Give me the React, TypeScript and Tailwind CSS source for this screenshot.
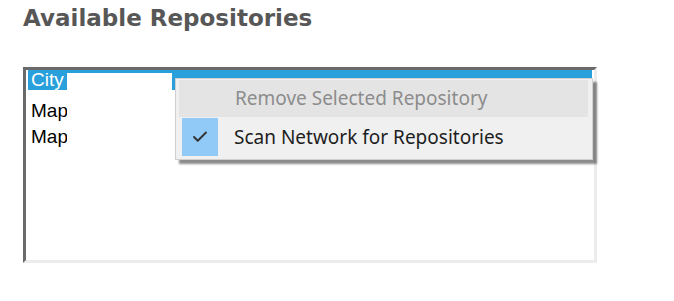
import { Check } from "lucide-react";

const repos = [
    { name: "City", selected: true },
    { name: "Map", selected: false },
    { name: "Map", selected: false },
];

const ContextMenu = () => {
    return (
        <div className="absolute left-[175px] top-[78px] w-[418px] h-[82px] bg-[#f0f0f0] border border-[#cfcfcf] shadow-[4px_4px_2px_rgba(0,0,0,0.45)] p-[1px] font-['Noto_Sans',sans-serif]">
            <div className="flex items-center h-[37px] ml-[2px] mr-[3px] bg-[#e4e4e4]">
                <div className="w-[56px] shrink-0" />
                <span className="text-[19px] text-[#8c8c8c]">Remove Selected Repository</span>
            </div>
            <div className="flex items-center h-[38px] mt-[1px]">
                <div className="w-[36px] h-[38px] ml-[5px] mr-[16px] bg-[#91c9f7] flex items-center justify-center">
                    <Check size={18} strokeWidth={2.5} className="text-[#333]" />
                </div>
                <span className="text-[19px] text-[#1e1e1e]">Scan Network for Repositories</span>
            </div>
        </div>
    );
};

const App = () => {
    return (
        <div className="relative w-[674px] h-[301px] bg-white overflow-hidden">
            <h1 className="pl-[23px] pt-[4px] text-[23px] leading-[28px] font-bold text-[#575757] font-['DejaVu_Sans',sans-serif]">
                Available Repositories
            </h1>
            <div className="ml-[23px] mt-[35px] w-[574px] h-[196px] border-t-[3px] border-l-[3px] border-t-[#6a6a6a] border-l-[#6a6a6a] border-r-[3px] border-b-[3px] border-r-[#ececec] border-b-[#ececec] bg-white">
                <ul className="px-[2px] font-['Liberation_Sans',sans-serif] text-[19px]">
                    {repos.map((r, i) => (
                        <li
                            key={i}
                            className={
                                r.selected
                                    ? "h-[20px] leading-[20px] pl-[3px] bg-[#29a0dc] text-white"
                                    : "h-[26px] leading-[26px] pl-[3px] text-black [&:nth-child(2)]:mt-[8px]"
                            }
                        >
                            {r.name}
                        </li>
                    ))}
                </ul>
            </div>
            {/* redacted names */}
            <div className="absolute left-[67px] top-[73px] w-[105px] h-[77px] bg-white" />
            <ContextMenu />
        </div>
    );
};

export default App;
